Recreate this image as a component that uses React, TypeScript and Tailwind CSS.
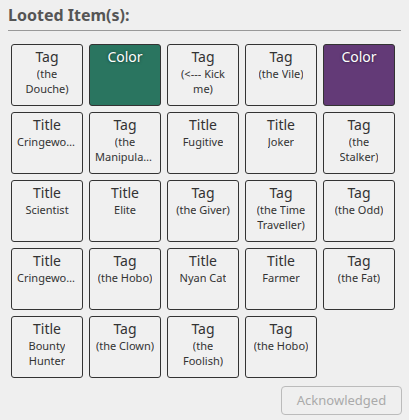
import React from 'react'

type Item = { kind: string; label?: string; color?: string }

const items: Item[] = [
  { kind: 'Tag', label: '(the Douche)' },
  { kind: 'Color', color: 'bg-[#2a7560]' },
  { kind: 'Tag', label: '(<--- Kick me)' },
  { kind: 'Tag', label: '(the Vile)' },
  { kind: 'Color', color: 'bg-[#633a77]' },
  { kind: 'Title', label: 'Cringeworthy' },
  { kind: 'Tag', label: '(the Manipulator)' },
  { kind: 'Title', label: 'Fugitive' },
  { kind: 'Title', label: 'Joker' },
  { kind: 'Tag', label: '(the Stalker)' },
  { kind: 'Title', label: 'Scientist' },
  { kind: 'Title', label: 'Elite' },
  { kind: 'Tag', label: '(the Giver)' },
  { kind: 'Tag', label: '(the Time Traveller)' },
  { kind: 'Tag', label: '(the Odd)' },
  { kind: 'Title', label: 'Cringeworthy' },
  { kind: 'Tag', label: '(the Hobo)' },
  { kind: 'Title', label: 'Nyan Cat' },
  { kind: 'Title', label: 'Farmer' },
  { kind: 'Tag', label: '(the Fat)' },
  { kind: 'Title', label: 'Bounty Hunter' },
  { kind: 'Tag', label: '(the Clown)' },
  { kind: 'Tag', label: '(the Foolish)' },
  { kind: 'Tag', label: '(the Hobo)' },
]

function LootBox({ item }: { item: Item }) {
  if (item.color) {
    return (
      <div className={`h-[62px] rounded-[3px] border border-[#333] ${item.color} pt-[2px] text-center`}>
        <div className="text-[14px] leading-[19px] text-white [text-shadow:0_0_3px_rgba(0,0,0,0.6)]">
          {item.kind}
        </div>
      </div>
    )
  }
  return (
    <div className="h-[62px] rounded-[3px] border border-[#333] bg-[#f0f0f0] px-[5px] pt-[2px] text-center text-[#333]">
      <div className="text-[14px] leading-[19px]">{item.kind}</div>
      <div className="text-[11px] leading-[15px]">
        {item.label!.split(' ').map((w, i) => (
          <React.Fragment key={i}>
            {i > 0 && ' '}
            <span className="inline-block max-w-full overflow-hidden text-ellipsis whitespace-nowrap align-top">
              {w}
            </span>
          </React.Fragment>
        ))}
      </div>
    </div>
  )
}

export default function App() {
  return (
    <div className="w-[409px] h-[420px] bg-[#efefef] px-2 font-['Noto_Sans',sans-serif]">
      <h2 className="pt-[5px] text-[16px] font-bold leading-[20px] text-[#555]">Looted Item(s):</h2>
      <div className="mt-[5px] border-t border-[#999]" />
      <div className="mt-[13px] ml-[3px] grid grid-cols-[repeat(5,72px)] gap-[6px]">
        {items.map((item, i) => (
          <LootBox key={i} item={item} />
        ))}
      </div>
      <div className="mt-[8px] -mr-[1px] flex justify-end">
        <button
          disabled
          className="h-[29px] w-[121px] rounded-[4px] border border-[#bbb] text-[13px] text-[#aaa]"
        >
          Acknowledged
        </button>
      </div>
    </div>
  )
}
